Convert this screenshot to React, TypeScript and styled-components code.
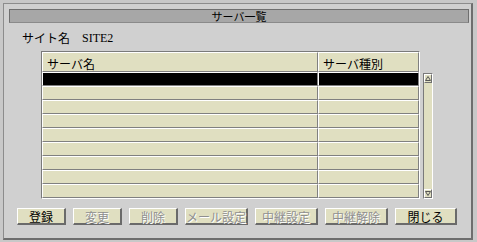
import styled, { createGlobalStyle } from 'styled-components';

const Global = createGlobalStyle`
  html, body { margin: 0; padding: 0; background: #c8c8c8; }
  body { font-family: "Noto Sans CJK JP", "DejaVu Sans", sans-serif; font-size: 12px; color: #000; }
`;

const BEIGE = '#e0dfc1';
const PANEL = '#d0d0d0';

const Outer = styled.div`
  width: 477px;
  height: 242px;
  box-sizing: border-box;
  background: #c8c8c8;
  padding: 3px 4px 2px 3px;
`;

const Win = styled.div`
  height: 100%;
  box-sizing: border-box;
  background: ${PANEL};
  border-top: 1px solid #8c8c8c;
  border-left: 1px solid #8c8c8c;
  border-right: 2px solid #6e6e6e;
  border-bottom: 2px solid #6e6e6e;
  display: flex;
  flex-direction: column;
`;

const TitleBar = styled.div`
  margin: 5px 2px 0 5px;
  height: 14px;
  box-sizing: border-box;
  background: #a7a7a7;
  border: 1px solid #6f6f6f;
  border-bottom-color: #8a8a8a;
  display: flex;
  align-items: center;
  justify-content: center;
  font-size: 11px;
  line-height: 12px;
`;

const SiteLine = styled.div`
  margin: 8px 0 0 18px;
  height: 14px;
  line-height: 14px;
  display: flex;
  gap: 12px;
`;

const SiteValue = styled.span`
  font-family: "Liberation Serif", serif;
  font-size: 12px;
`;

const Body = styled.div`
  margin: 6px 0 0 37px;
  display: flex;
  gap: 3px;
  align-items: flex-end;
`;

const Table = styled.div`
  width: 379px;
  box-sizing: border-box;
  border-top: 1px solid #7a7a7a;
  border-left: 1px solid #7a7a7a;
  border-right: 1px solid #fff;
  border-bottom: 1px solid #fff;
  display: grid;
  grid-template-columns: 276px 1fr;
  background: ${BEIGE};
`;

const Cell = styled.div<{ $head?: boolean; $sel?: boolean }>`
  height: ${(p) => (p.$head ? 20 : 14)}px;
  box-sizing: border-box;
  background: ${(p) => (p.$sel ? '#000' : BEIGE)};
  border-top: 1px solid #fff;
  border-left: 1px solid #fff;
  border-right: 1px solid #808080;
  border-bottom: 1px solid #808080;
  padding: ${(p) => (p.$head ? '4px 0 0 4px' : '0')};
  font-size: 12px;
  line-height: 13px;
  white-space: nowrap;
`;

const Scroll = styled.div`
  width: 10px;
  height: 126px;
  box-sizing: border-box;
  border-top: 1px solid #7a7a7a;
  border-left: 1px solid #7a7a7a;
  border-right: 1px solid #fff;
  border-bottom: 1px solid #fff;
  background: ${BEIGE};
  display: flex;
  flex-direction: column;
  justify-content: space-between;
`;

const Arrow = styled.div`
  height: 9px;
  box-sizing: border-box;
  border-top: 1px solid #fff;
  border-left: 1px solid #fff;
  border-right: 1px solid #707070;
  border-bottom: 1px solid #707070;
  background: ${BEIGE};
  display: flex;
  align-items: center;
  justify-content: center;
`;

const Buttons = styled.div`
  margin: 9px 0 0 13px;
  display: flex;
  gap: 7px;
`;

const Btn = styled.button<{ $w: number; $off?: boolean }>`
  width: ${(p) => p.$w}px;
  height: 17px;
  box-sizing: border-box;
  padding: 0;
  margin: 0;
  background: ${BEIGE};
  border-top: 1px solid #fff;
  border-left: 1px solid #fff;
  border-right: 2px solid #6a6a6a;
  border-bottom: 2px solid #6a6a6a;
  font-family: "Noto Sans CJK JP", sans-serif;
  font-size: 12px;
  line-height: 13px;
  color: ${(p) => (p.$off ? '#8f8f8f' : '#000')};
  text-shadow: ${(p) => (p.$off ? '1px 1px 0 #fff' : 'none')};
`;

const rows = Array.from({ length: 9 }, (_, i) => i);

const buttons = [
  { t: '登録', w: 49 },
  { t: '変更', w: 49, off: true },
  { t: '削除', w: 49, off: true },
  { t: 'メール設定', w: 63, off: true },
  { t: '中継設定', w: 63, off: true },
  { t: '中継解除', w: 63, off: true },
  { t: '閉じる', w: 62 },
];

export default function App() {
  return (
    <Outer>
      <Global />
      <Win>
        <TitleBar>サーバ一覧</TitleBar>
        <SiteLine>
          <span>サイト名</span>
          <SiteValue>SITE2</SiteValue>
        </SiteLine>
        <Body>
          <Table>
            <Cell $head>サーバ名</Cell>
            <Cell $head>サーバ種別</Cell>
            {rows.map((r) => [
              <Cell key={`a${r}`} $sel={r === 0} />,
              <Cell key={`b${r}`} $sel={r === 0} />,
            ])}
          </Table>
          <Scroll>
            <Arrow>
              <svg width="6" height="5" viewBox="0 0 6 5">
                <path d="M0.5 4.5 L3 0.5 L5.5 4.5 Z" fill="none" stroke="#555" strokeWidth="1" />
              </svg>
            </Arrow>
            <Arrow>
              <svg width="6" height="5" viewBox="0 0 6 5">
                <path d="M0.5 0.5 L3 4.5 L5.5 0.5 Z" fill="none" stroke="#555" strokeWidth="1" />
              </svg>
            </Arrow>
          </Scroll>
        </Body>
        <Buttons>
          {buttons.map((b) => (
            <Btn key={b.t} $w={b.w} $off={b.off}>
              {b.t}
            </Btn>
          ))}
        </Buttons>
      </Win>
    </Outer>
  );
}
